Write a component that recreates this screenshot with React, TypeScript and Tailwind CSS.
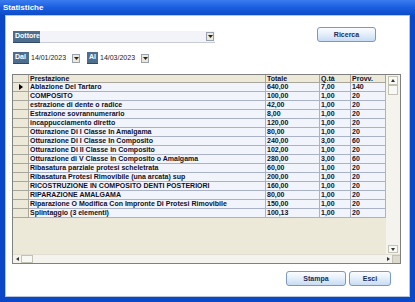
import React from "react";

const rows = [
  ["Ablazione Del Tartaro", "640,00", "7,00", "140"],
  ["COMPOSITO", "100,00", "1,00", "20"],
  ["estrazione di dente o radice", "42,00", "1,00", "20"],
  ["Estrazione sovrannumerario", "8,00", "1,00", "20"],
  ["incappucciamento diretto", "120,00", "1,00", "20"],
  ["Otturazione Di I Classe In Amalgama", "80,00", "1,00", "20"],
  ["Otturazione Di I Classe In Composito", "240,00", "3,00", "60"],
  ["Otturazione Di II Classe in Composito", "102,00", "1,00", "20"],
  ["Otturazione di V Classe in Composito o Amalgama", "280,00", "3,00", "60"],
  ["Ribasatura parziale protesi scheletrata", "60,00", "1,00", "20"],
  ["Ribasatura Protesi Rimovibile (una arcata) sup", "200,00", "1,00", "20"],
  ["RICOSTRUZIONE IN COMPOSITO DENTI POSTERIORI", "160,00", "1,00", "20"],
  ["RIPARAZIONE AMALGAMA", "80,00", "1,00", "20"],
  ["Riparazione O Modifica Con Impronte Di Protesi Rimovibile", "150,00", "1,00", "20"],
  ["Splintaggio (3 elementi)", "100,13", "1,00", "20"],
];

const XpButton = ({ label, w }: { label: string; w: string }) => (
  <button
    className={`${w} h-[15px] block rounded-[3px] border border-[#7a98c0] bg-linear-to-b from-[#fbfdff] via-[#e3eefb] to-[#c9dcf3] text-[7px] font-bold text-[#1c2c5c] leading-none`}
  >
    {label}
  </button>
);

const Label = ({ text, w }: { text: string; w: string }) => (
  <div
    className={`${w} h-[12px] bg-[#4e6e8e] text-white text-[7px] font-bold flex items-center pl-[2px] border-b border-[#2f4a66]`}
  >
    {text}
  </div>
);

const Arrow = () => (
  <div className="w-[8px] h-[9px] bg-[#ece9d8] border border-[#9aa2b0] flex items-center justify-center">
    <svg width="5" height="3" viewBox="0 0 5 3">
      <path d="M0 0h5L2.5 3z" fill="#222" />
    </svg>
  </div>
);

const DateField = ({ value }: { value: string }) => (
  <div className="w-[52px] h-[12px] bg-white flex items-center justify-between pl-[2px] pr-[1px] text-[7px] text-[#222]">
    <span>{value}</span>
    <Arrow />
  </div>
);

export default function App() {
  return (
    <div className="w-[415px] h-[302px] bg-[#0b48c8] flex flex-col overflow-hidden font-['Liberation_Sans',Arial,sans-serif]">
      <div className="h-[15px] bg-linear-to-b from-[#3b7cf0] via-[#1a5ee0] to-[#0d4cc8] flex items-center pl-[3px] text-white text-[8px] font-bold">
        Statistiche
      </div>
      <div className="flex-1 mx-[5px] mb-[5px] bg-white border border-[#b8c4d8] flex flex-col">
        <div className="flex items-start pt-[11px] pl-[7px] pr-[33px]">
          <div className="flex mt-[4px]">
            <Label text="Dottore" w="w-[27px]" />
            <div className="w-[175px] h-[12px] bg-[#f2f4f9] border-b border-[#c8ccd6] flex items-center justify-end pr-[1px]">
              <Arrow />
            </div>
          </div>
          <div className="ml-auto flex">
            <XpButton label="Ricerca" w="w-[59px]" />
          </div>
        </div>
        <div className="flex items-center pl-[7px] mt-[9px] gap-0">
          <Label text="Dal" w="w-[16px]" />
          <DateField value="14/01/2023" />
          <div className="w-[6px]" />
          <Label text="Al" w="w-[11px]" />
          <DateField value="14/03/2023" />
        </div>
        <div className="ml-[6px] mt-[10px] w-[389px] h-[190px] border border-[#808080] bg-[#ece9d8] flex flex-col text-[7px] font-bold text-[#101028]">
          <div className="flex flex-1 min-h-0">
            <div className="flex flex-col w-[373px]">
              <div className="flex h-[8px] leading-[8px]">
                <div className="w-[16px] border-r border-b border-[#a8a69a]" />
                <div className="w-[237px] border-r border-b border-[#a8a69a] pl-[1px]">Prestazione</div>
                <div className="w-[54px] border-r border-b border-[#a8a69a] pl-[1px]">Totale</div>
                <div className="w-[31px] border-r border-b border-[#a8a69a] pl-[1px]">Q.tà</div>
                <div className="w-[35px] border-r border-b border-[#a8a69a] pl-[1px]">Provv.</div>
              </div>
              {rows.map(([name, tot, qta, provv], i) => (
                <div key={i} className="flex h-[9px] leading-[8px]">
                  <div className="w-[16px] border-r border-b border-[#a8a69a] flex items-center justify-center">
                    {i === 0 && (
                      <svg width="4" height="6" viewBox="0 0 4 6">
                        <path d="M0 0l4 3-4 3z" fill="#000" />
                      </svg>
                    )}
                  </div>
                  <div className="w-[237px] bg-[#f1f4fb] border-r border-b border-[#a9b2c6] pl-[1px] whitespace-nowrap overflow-hidden">
                    {name}
                  </div>
                  <div className="w-[54px] bg-[#f1f4fb] border-r border-b border-[#a9b2c6] pl-[1px]">{tot}</div>
                  <div className="w-[31px] bg-[#f1f4fb] border-r border-b border-[#a9b2c6] pl-[1px]">{qta}</div>
                  <div className="w-[35px] bg-[#f1f4fb] border-r border-b border-[#a9b2c6] pl-[1px]">{provv}</div>
                </div>
              ))}
            </div>
            <div className="w-[15px] flex flex-col bg-[#f4f3ee]">
              <div className="h-[9px] mx-[2px] mt-[1px] bg-[#f8f8f4] border border-[#c4c2b4] flex items-center justify-center">
                <svg width="4" height="3" viewBox="0 0 4 3">
                  <path d="M0 3h4L2 0z" fill="#333" />
                </svg>
              </div>
              <div className="h-[10px] mx-[2px] bg-[#f8f8f4] border border-[#c4c2b4]" />
              <div className="flex-1" />
              <div className="h-[8px] mx-[2px] mb-[1px] bg-[#f8f8f4] border border-[#c4c2b4] flex items-center justify-center">
                <svg width="4" height="3" viewBox="0 0 4 3">
                  <path d="M0 0h4L2 3z" fill="#333" />
                </svg>
              </div>
            </div>
          </div>
          <div className="h-[9px] flex bg-[#f4f3ee] border-t border-[#e0ded2]">
            <div className="w-[8px] flex items-center justify-center">
              <svg width="3" height="4" viewBox="0 0 3 4">
                <path d="M3 0v4L0 2z" fill="#333" />
              </svg>
            </div>
            <div className="w-[12px] bg-[#f8f8f4] border border-[#c4c2b4]" />
            <div className="flex-1" />
            <div className="w-[8px] flex items-center justify-center">
              <svg width="3" height="4" viewBox="0 0 3 4">
                <path d="M0 0v4l3-2z" fill="#333" />
              </svg>
            </div>
            <div className="w-[8px] bg-[#dcdacc] border-l border-t border-[#c4c2b4]" />
          </div>
        </div>
        <div className="flex justify-end gap-[3px] pr-[18px] mt-[7px]">
          <XpButton label="Stampa" w="w-[60px]" />
          <XpButton label="Esci" w="w-[42px]" />
        </div>
      </div>
    </div>
  );
}
